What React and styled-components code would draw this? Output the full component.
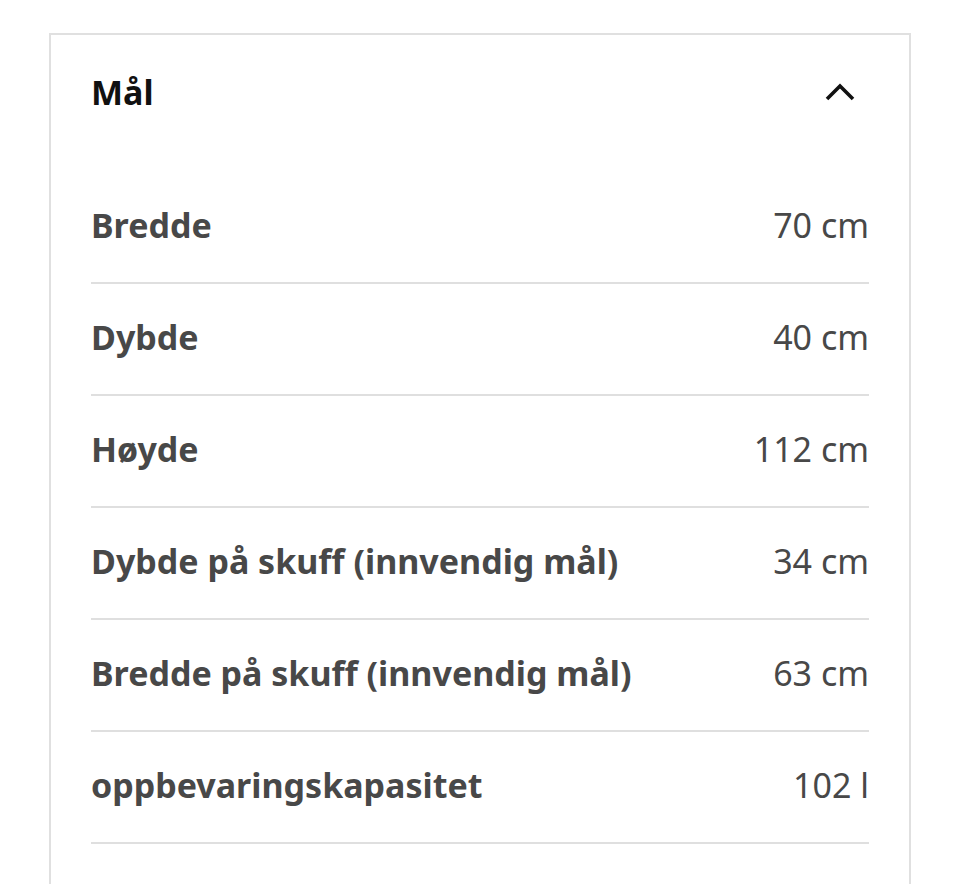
import styled, { createGlobalStyle } from "styled-components";

const GlobalStyle = createGlobalStyle`
  body {
    margin: 0;
    background: #ffffff;
    font-family: "Noto Sans", "Open Sans", sans-serif;
  }
`;

const Page = styled.div`
  padding: 33px 49px 0 49px;
  height: 884px;
  box-sizing: border-box;
  overflow: hidden;
`;

const Card = styled.section`
  border: 2px solid #e0e0e0;
  border-bottom: none;
  padding: 0 40px;
  min-height: 900px;
`;

const Header = styled.header`
  display: flex;
  align-items: center;
  justify-content: space-between;
  padding: 38px 0 61px;
`;

const Title = styled.h2`
  margin: 0;
  font-size: 34px;
  line-height: 38px;
  font-weight: 700;
  color: #111111;
`;

const ToggleButton = styled.button`
  display: flex;
  align-items: center;
  justify-content: center;
  height: 38px;
  margin-right: 14px;
  padding: 0;
  border: none;
  background: none;
  cursor: pointer;
`;

const List = styled.dl`
  margin: 0;
`;

const Row = styled.div`
  display: flex;
  align-items: center;
  justify-content: space-between;
  height: 112px;
  padding-bottom: 4px;
  box-sizing: border-box;
  border-bottom: 2px solid #dfdfdf;
`;

const Label = styled.dt`
  font-size: 34px;
  font-weight: 700;
  color: #484848;
`;

const Value = styled.dd`
  margin: 0;
  font-size: 34px;
  font-weight: 400;
  color: #484848;
`;

const rows = [
  ["Bredde", "70 cm"],
  ["Dybde", "40 cm"],
  ["Høyde", "112 cm"],
  ["Dybde på skuff (innvendig mål)", "34 cm"],
  ["Bredde på skuff (innvendig mål)", "63 cm"],
  ["oppbevaringskapasitet", "102 l"],
];

const App = () => (
  <Page>
    <GlobalStyle />
    <Card>
      <Header>
        <Title>Mål</Title>
        <ToggleButton aria-label="Skjul">
          <svg width="30" height="18" viewBox="0 0 30 18">
            <polyline
              points="2,16 15,3 28,16"
              fill="none"
              stroke="#111"
              strokeWidth="3.6"
            />
          </svg>
        </ToggleButton>
      </Header>
      <List>
        {rows.map(([label, value]) => (
          <Row key={label}>
            <Label>{label}</Label>
            <Value>{value}</Value>
          </Row>
        ))}
      </List>
    </Card>
  </Page>
);

export default App;
